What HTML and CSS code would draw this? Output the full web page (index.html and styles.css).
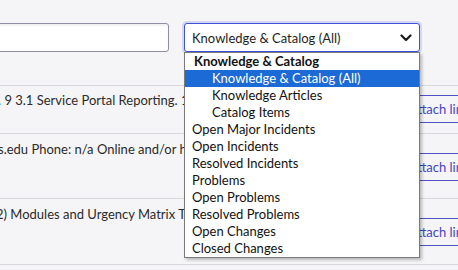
FILE: index.html
```html
<!DOCTYPE html>
<html lang="en">
<head>
    <meta charset="UTF-8" />
    <meta name="viewport" content="width=device-width, initial-scale=1.0"/>
    <title>Search</title>
    <link rel="stylesheet" href="styles.css">
</head>
<body>
    <div class="page">
        <div class="toolbar">
            <input type="text" class="search" />
            <div class="filter">
                <div class="filter-select">
                    <span>Knowledge &amp; Catalog (All)</span>
                    <svg class="chevron" width="12" height="8" viewBox="0 0 12 8">
                        <path d="M1.5 1.5 L6 6 L10.5 1.5" fill="none" stroke="#1c1c1c" stroke-width="2.2" stroke-linecap="round" stroke-linejoin="round"/>
                    </svg>
                </div>
                <ul class="filter-menu">
                    <li class="group">Knowledge &amp; Catalog</li>
                    <li class="sub selected">Knowledge &amp; Catalog (All)</li>
                    <li class="sub">Knowledge Articles</li>
                    <li class="sub">Catalog Items</li>
                    <li>Open Major Incidents</li>
                    <li>Open Incidents</li>
                    <li>Resolved Incidents</li>
                    <li>Problems</li>
                    <li>Open Problems</li>
                    <li>Resolved Problems</li>
                    <li>Open Changes</li>
                    <li>Closed Changes</li>
                </ul>
            </div>
        </div>

        <div class="results">
            <div class="result first">
                <p class="snippet">. 9 3.1 Service Portal Reporting. 11 Service Portal Dashboards and Reports</p>
                <button class="attach">Attach link</button>
            </div>
            <div class="result">
                <p class="snippet">s.edu Phone: n/a Online and/or help desk contact information for support</p>
                <button class="attach">Attach link</button>
            </div>
            <div class="result">
                <p class="snippet cut">2) Modules and Urgency Matrix Training for service desk staff</p>
                <button class="attach">Attach link</button>
            </div>
        </div>
    </div>
</body>
</html>
```

FILE: styles.css
```css
body {
    margin: 0;
    padding: 0;
    background-color: #f5f5f7;
    font-family: Lato, "Noto Sans", sans-serif;
    color: #2b2b2b;
}

.page {
    width: 458px;
    height: 270px;
    overflow: hidden;
}

.toolbar {
    display: flex;
    align-items: flex-start;
    gap: 15px;
    height: 85px;
    padding-top: 23px;
    box-sizing: border-box;
}

.search {
    width: 189px;
    height: 29px;
    margin: 0 0 0 -20px;
    box-sizing: border-box;
    border: 1px solid #8e8ea0;
    border-radius: 3px;
    background: #fff;
    box-shadow: inset 0 2px 2px rgba(0,0,0,0.06);
    outline: none;
}

.filter {
    position: relative;
    width: 236px;
}

.filter-select {
    display: flex;
    align-items: center;
    justify-content: space-between;
    height: 29px;
    box-sizing: border-box;
    padding: 0 6px 0 7px;
    border: 1px solid #3f51d6;
    border-radius: 3px;
    background: #fff;
    box-shadow: 0 0 0 2px #d2d6f7;
    font-size: 13px;
    color: #1e1e1e;
}

.chevron {
    display: block;
    margin-right: 1px;
}

/* open dropdown list */
.filter-menu {
    position: absolute;
    top: 29px;
    left: 0;
    width: 236px;
    box-sizing: border-box;
    margin: 0;
    padding: 0;
    list-style: none;
    background: #fff;
    border: 1px solid #7a7a7a;
    box-shadow: 2px 2px 3px rgba(0,0,0,0.25);
    font-size: 13px;
    color: #111;
    z-index: 10;
}

.filter-menu li {
    height: 17px;
    line-height: 17px;
    padding-left: 7px;
    white-space: nowrap;
}

.filter-menu .group {
    font-weight: bold;
    padding-left: 9px;
}

.filter-menu .sub {
    padding-left: 27px;
}

.filter-menu .selected {
    background-color: #1b6ad5;
    color: #fff;
}

.result {
    display: flex;
    align-items: flex-start;
    height: 48px;
    box-sizing: border-box;
    border-top: 1px solid #d8d8de;
    padding-top: 6px;
}

.result + .result {
    height: 65px;
    padding-top: 7px;
}

.result:last-child {
    height: 67px;
    border-bottom: 1px solid #d8d8de;
}

.snippet {
    flex: 1;
    min-width: 0;
    margin: 0 0 0 -2px;
    font-size: 13px;
    line-height: 17px;
    white-space: nowrap;
    overflow: hidden;
}

.snippet.cut {
    margin-left: -4px;
}

.attach {
    flex-shrink: 0;
    width: 92px;
    height: 28px;
    margin: 3px -30px 0 0;
    padding: 0 0 0 12px;
    text-align: left;
    border: 1px solid #5151c6;
    border-radius: 3px;
    background: transparent;
    color: #4343c2;
    font-family: Lato, "Noto Sans", sans-serif;
    font-size: 13px;
}

.result + .result .attach {
    margin-top: 12px;
}
```
